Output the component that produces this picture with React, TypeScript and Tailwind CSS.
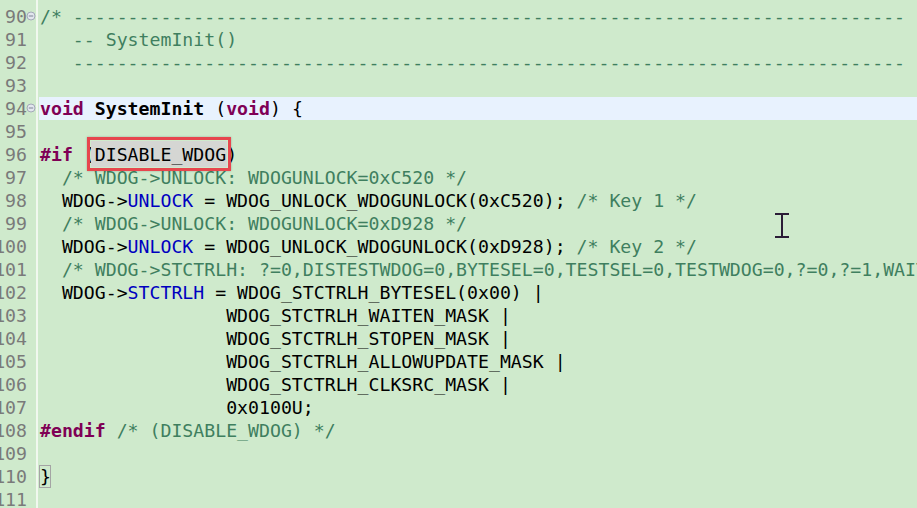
import React from 'react';

type Seg = { t: string; c?: 'kw' | 'cm' | 'fd' | 'fn' | 'mark' | 'brace' };

const dashes = '-'.repeat(76);
const pad = ' '.repeat(17);

const lines: Seg[][] = [
  [{ t: '/* ' + dashes, c: 'cm' }],
  [{ t: '   -- SystemInit()', c: 'cm' }],
  [{ t: '   ' + dashes, c: 'cm' }],
  [],
  [{ t: 'void', c: 'kw' }, { t: ' ' }, { t: 'SystemInit', c: 'fn' }, { t: ' (' }, { t: 'void', c: 'kw' }, { t: ') {' }],
  [],
  [{ t: '#if', c: 'kw' }, { t: ' (' }, { t: 'DISABLE_WDOG', c: 'mark' }, { t: ')' }],
  [{ t: '  /* WDOG->UNLOCK: WDOGUNLOCK=0xC520 */', c: 'cm' }],
  [{ t: '  WDOG->' }, { t: 'UNLOCK', c: 'fd' }, { t: ' = WDOG_UNLOCK_WDOGUNLOCK(0xC520); ' }, { t: '/* Key 1 */', c: 'cm' }],
  [{ t: '  /* WDOG->UNLOCK: WDOGUNLOCK=0xD928 */', c: 'cm' }],
  [{ t: '  WDOG->' }, { t: 'UNLOCK', c: 'fd' }, { t: ' = WDOG_UNLOCK_WDOGUNLOCK(0xD928); ' }, { t: '/* Key 2 */', c: 'cm' }],
  [{ t: '  /* WDOG->STCTRLH: ?=0,DISTESTWDOG=0,BYTESEL=0,TESTSEL=0,TESTWDOG=0,?=0,?=1,WAITEN=1,STOPEN=1,DBGEN=0,ALLOWUPDATE=1,WINEN=0,IRQRSTEN=0,CLKSRC=1,WDOGEN=0 */', c: 'cm' }],
  [{ t: '  WDOG->' }, { t: 'STCTRLH', c: 'fd' }, { t: ' = WDOG_STCTRLH_BYTESEL(0x00) |' }],
  [{ t: pad + 'WDOG_STCTRLH_WAITEN_MASK |' }],
  [{ t: pad + 'WDOG_STCTRLH_STOPEN_MASK |' }],
  [{ t: pad + 'WDOG_STCTRLH_ALLOWUPDATE_MASK |' }],
  [{ t: pad + 'WDOG_STCTRLH_CLKSRC_MASK |' }],
  [{ t: pad + '0x0100U;' }],
  [{ t: '#endif', c: 'kw' }, { t: ' ' }, { t: '/* (DISABLE_WDOG) */', c: 'cm' }],
  [],
  [{ t: '}', c: 'brace' }],
  [],
];

const FoldIcon = () => (
  <svg width="10" height="10" viewBox="0 0 10 10" className="mt-[-2px]">
    <circle cx="5" cy="5" r="4" fill="#e2e6ee" stroke="#a3a9b8" strokeWidth="1" />
    <line x1="2.8" y1="5" x2="7.2" y2="5" stroke="#7d8494" strokeWidth="1" />
  </svg>
);

function Segment({ s }: { s: Seg }) {
  if (s.c === 'kw') return <span className="text-[#7f0055] font-bold">{s.t}</span>;
  if (s.c === 'cm') return <span className="text-[#3f7f5f]">{s.t}</span>;
  if (s.c === 'fd') return <span className="text-[#0000c0]">{s.t}</span>;
  if (s.c === 'fn') return <span className="font-bold">{s.t}</span>;
  if (s.c === 'brace')
    return <span className="shadow-[inset_0_0_0_1px_#a4a4a4] inline-block h-[23px] ml-[-1px] pl-px">{s.t}</span>;
  if (s.c === 'mark')
    return (
      <span className="relative inline-block">
        <span className="absolute left-[-4px] right-[-1px] top-[-2px] bottom-[-1px] bg-[#d5d6d3]" />
        <span className="relative">{s.t}</span>
        <span className="absolute left-[-8px] right-[-5px] top-[-6px] bottom-[-5px] border-[3px] border-[#e7464e] shadow-[0_0_2px_rgba(0,0,0,0.25)]" />
      </span>
    );
  return <span>{s.t}</span>;
}

export default function App() {
  return (
    <div className="relative w-[917px] h-[508px] overflow-hidden bg-[#cfeacc] text-black font-['DejaVu_Sans_Mono',monospace] text-[18.2px] leading-[23px] pt-[5px]">
      <div className="flex">
        <div className="w-[36px] shrink-0 flex flex-col text-[#7a7a7a]">
          {lines.map((_, i) => (
            <div key={i} className="h-[23px] flex items-center justify-end whitespace-pre">
              <span className="mr-[9px]">{90 + i}</span>
              {(i === 0 || i === 4) && (
                <span className="absolute left-[26px]">
                  <FoldIcon />
                </span>
              )}
            </div>
          ))}
        </div>
        <div className="w-[2px] shrink-0 bg-[#f1f8ef] mt-[-5px] h-[508px]" />
        <div className="flex-1 min-w-0 flex flex-col">
          {lines.map((segs, i) => (
            <div
              key={i}
              className={`h-[23px] whitespace-pre pl-[2px] ${i === 4 ? 'bg-[#e8f2fe] ml-px pl-px' : ''}`}
            >
              {segs.map((s, j) => (
                <Segment key={j} s={s} />
              ))}
            </div>
          ))}
        </div>
      </div>
      <svg className="absolute left-[775px] top-[213px]" width="14" height="25" viewBox="0 0 14 25">
        <rect x="0" y="0" width="14" height="2" fill="#2b1d36" />
        <rect x="6" y="0" width="2" height="25" fill="#2b1d36" />
        <rect x="0" y="23" width="14" height="2" fill="#2b1d36" />
      </svg>
    </div>
  );
}
